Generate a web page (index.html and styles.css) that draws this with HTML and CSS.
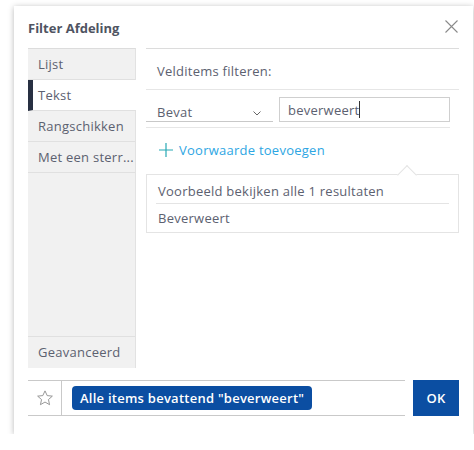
FILE: index.html
```html
<!DOCTYPE html>
<html>
<head>
<meta charset="utf-8">
<link rel="stylesheet" href="styles.css">
</head>
<body>
<div class="dialog">
  <div class="header">
    <div class="title">Filter Afdeling</div>
    <svg class="close" width="13" height="13" viewBox="0 0 13 13"><path d="M0.5 0.5L12.5 12.5M12.5 0.5L0.5 12.5" stroke="#8a8a8a" stroke-width="1.1" fill="none"/></svg>
  </div>
  <div class="body">
    <div class="sidebar">
      <div class="tab">Lijst</div>
      <div class="tab active">Tekst</div>
      <div class="tab">Rangschikken</div>
      <div class="tab">Met een sterr...</div>
      <div class="spacer"></div>
      <div class="tab last">Geavanceerd</div>
    </div>
    <div class="panel">
      <div class="label-row">Velditems filteren:</div>
      <div class="cond-row">
        <div class="select"><span>Bevat</span>
          <svg class="chev" width="8" height="5" viewBox="0 0 8 5"><path d="M0.5 0.5L4 4L7.5 0.5" stroke="#666" stroke-width="1" fill="none"/></svg>
        </div>
        <div class="input"><span>beverweert</span><span class="caret"></span></div>
      </div>
      <div class="add-row">
        <svg class="plus" width="14" height="14" viewBox="0 0 14 14"><path d="M7 0V14M0 7H14" stroke="#29a9b5" stroke-width="1.2" fill="none"/></svg>
        <span class="add-link">Voorwaarde toevoegen</span>
      </div>
      <div class="preview">
        <div class="notch"></div>
        <div class="preview-head">Voorbeeld bekijken alle 1 resultaten</div>
        <div class="preview-item">Beverweert</div>
      </div>
    </div>
  </div>
  <div class="footer">
    <div class="filterbar">
      <div class="star-cell">
        <svg width="18" height="18" viewBox="0 0 24 24"><path d="M12 2.5l2.9 6.3 6.9.7-5.2 4.6 1.5 6.8L12 17.4l-6.1 3.5 1.5-6.8-5.2-4.6 6.9-.7z" fill="none" stroke="#8c8c8c" stroke-width="1.2" stroke-linejoin="round"/></svg>
      </div>
      <div class="chip-cell"><span class="chip">Alle items bevattend "beverweert"</span></div>
    </div>
    <div class="ok">OK</div>
  </div>
</div>
</body>
</html>
```
FILE: styles.css
```css
* { box-sizing: border-box; }
body {
  margin: 0;
  background: #fff;
  font-family: "Open Sans", "Noto Sans", sans-serif;
  font-size: 13px;
  letter-spacing: 0.25px;
  color: #5c6170;
}
.dialog {
  margin: 6px 0 0 14px;
  width: 459px;
  height: 428px;
  background: #fff;
  box-shadow: 0 1px 6px rgba(0,0,0,0.28);
  padding: 0 14px 0 14px;
  display: flex;
  flex-direction: column;
}
.header {
  height: 42px;
  display: flex;
  align-items: center;
  justify-content: space-between;
  padding-top: 1px;
}
.title {
  font-weight: 700;
  font-size: 13px;
  letter-spacing: 0;
  color: #4f5462;
}
.close { margin-right: 1px; margin-top: -2px; }
.body {
  display: flex;
  gap: 10px;
  height: 320px;
}
.sidebar {
  width: 108px;
  background: #f1f1f1;
  border-top: 1px solid #dcdcdc;
  border-right: 1px solid #e2e2e2;
  display: flex;
  flex-direction: column;
}
.tab {
  height: 31px;
  line-height: 31px;
  padding-left: 10px;
  border-bottom: 1px solid #e0e0e0;
  white-space: nowrap;
}
.tab.active {
  background: #fff;
  border-left: 5px solid #283042;
  padding-left: 5px;
  margin-right: -1px;
}
.spacer { flex: 1; border-bottom: 1px solid #e0e0e0; }
.tab.last { border-bottom: none; }
.panel {
  flex: 1;
  border-top: 1px solid #dcdcdc;
  display: flex;
  flex-direction: column;
}
.label-row {
  height: 41px;
  line-height: 44px;
  padding-left: 11px;
  border-bottom: 1px solid #e6e6e6;
}
.cond-row {
  display: flex;
  gap: 6px;
  width: 304px;
  padding: 7px 0 5px;
  border-bottom: 1px solid #e6e6e6;
}
.select {
  width: 127px;
  height: 25px;
  border-bottom: 1px solid #c8c8c8;
  padding: 5px 12px 0 11px;
  display: flex;
  justify-content: space-between;
  align-items: center;
}
.chev { margin-top: 4px; }
.input {
  flex: 1;
  height: 25px;
  border: 1px solid #cfcfcf;
  padding-left: 8px;
  display: flex;
  align-items: center;
}
.caret {
  display: inline-block;
  width: 1px;
  height: 17px;
  background: #333;
  margin-left: 0;
}
.add-row {
  display: flex;
  align-items: center;
  height: 46px;
  padding-left: 13px;
  padding-bottom: 2px;
  gap: 6px;
}
.add-link { color: #2da6e3; font-size: 13px; }
.preview {
  position: relative;
  border: 1px solid #e4e4e4;
  padding: 0 9px 0 9px;
}
.notch {
  position: absolute;
  top: -7px;
  left: 253px;
  width: 14px;
  height: 14px;
  background: #fff;
  border-top: 1px solid #e4e4e4;
  border-left: 1px solid #e4e4e4;
  transform: rotate(45deg);
}
.preview-head {
  position: relative;
  height: 29px;
  line-height: 32px;
  padding-left: 2px;
  border-bottom: 1px solid #e4e4e4;
}
.preview-item {
  height: 28px;
  line-height: 29px;
  padding-left: 2px;
}
.footer {
  display: flex;
  margin-top: 12px;
  gap: 8px;
}
.filterbar {
  flex: 1;
  height: 36px;
  border-top: 1px solid #c9c9c9;
  border-bottom: 1px solid #c9c9c9;
  display: flex;
}
.star-cell {
  width: 34px;
  border-right: 1px solid #c9c9c9;
  display: flex;
  align-items: center;
  justify-content: center;
}
.chip-cell {
  display: flex;
  align-items: center;
  padding-left: 10px;
}
.chip {
  background: #0b4ea2;
  color: #fff;
  font-weight: 600;
  font-size: 13px;
  height: 24px;
  line-height: 24px;
  padding: 0 8px;
  border-radius: 4px;
  white-space: nowrap;
}
.ok {
  width: 46px;
  height: 36px;
  background: #0b4ea2;
  color: #fff;
  font-size: 13px;
  font-weight: 600;
  display: flex;
  align-items: center;
  justify-content: center;
}
```
